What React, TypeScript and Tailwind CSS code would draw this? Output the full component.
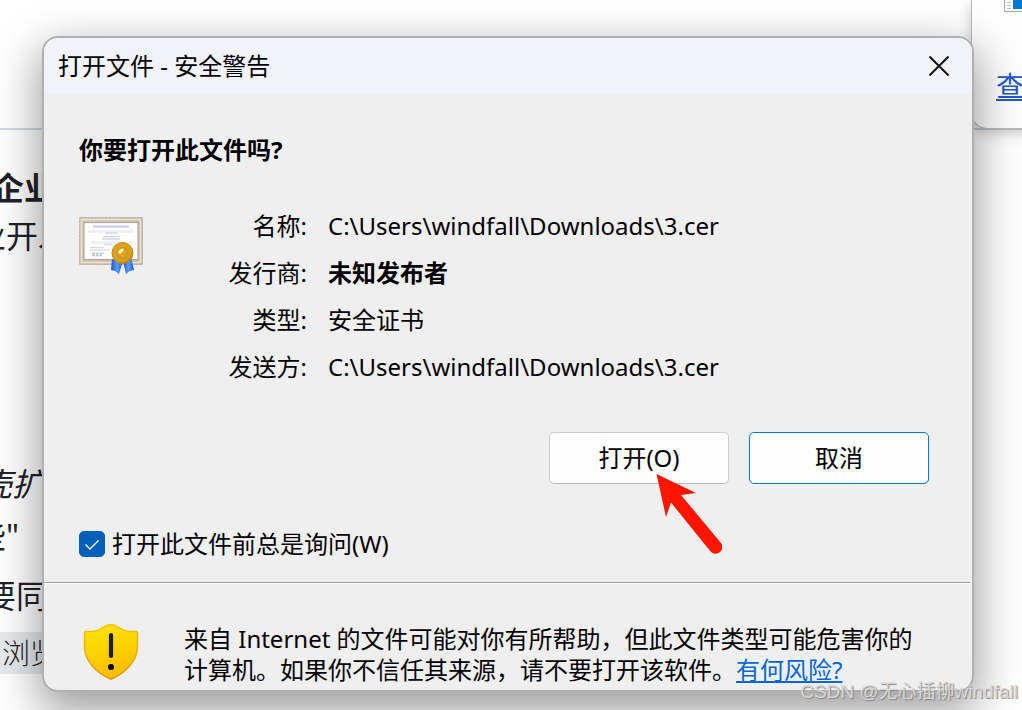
import React from "react";

const details = [
  { label: "名称:", value: "C:\\Users\\windfall\\Downloads\\3.cer", bold: false },
  { label: "发行商:", value: "未知发布者", bold: true },
  { label: "类型:", value: "安全证书", bold: false },
  { label: "发送方:", value: "C:\\Users\\windfall\\Downloads\\3.cer", bold: false },
];

function CertificateIcon() {
  return (
    <svg viewBox="0 0 64 58" className="h-[58px] w-16" aria-hidden="true">
      <defs>
        <linearGradient id="frame" x1="0" y1="0" x2="1" y2="1">
          <stop offset="0" stopColor="#d6cbbc" />
          <stop offset="1" stopColor="#c4b9aa" />
        </linearGradient>
        <radialGradient id="gold" cx="0.42" cy="0.4" r="0.62">
          <stop offset="0" stopColor="#f3d27a" />
          <stop offset="0.3" stopColor="#dba520" />
          <stop offset="0.8" stopColor="#dfa00b" />
          <stop offset="1" stopColor="#a87c1a" />
        </radialGradient>
        <linearGradient id="ribbon" x1="0" y1="0" x2="1" y2="0">
          <stop offset="0" stopColor="#1c55c9" />
          <stop offset="0.5" stopColor="#5b9bff" />
          <stop offset="1" stopColor="#1f5be0" />
        </linearGradient>
      </defs>
      <rect x="0" y="0" width="64" height="48" rx="1.5" fill="url(#frame)" />
      <rect x="0.8" y="0.8" width="62.4" height="46.4" rx="1" fill="none" stroke="#bdb3a6" strokeWidth="1.5" strokeDasharray="2 1.5" />
      <rect x="2.5" y="2.5" width="59" height="43" fill="none" stroke="#e9e2d8" strokeWidth="1.5" />
      <rect x="5" y="5.5" width="54" height="37" fill="#fdfdfb" stroke="#b3a797" strokeWidth="1.2" />
      <path d="M14 9.5h36" stroke="#c8cbe0" strokeWidth="1.8" />
      <path d="M9 14.5h46M12 25.5h42" stroke="#eceef3" strokeWidth="2.4" />
      <path d="M26 16h12M24 19.5h17M23 22h18" stroke="#d3d6e7" strokeWidth="1.3" />
      <path d="M25 27.5h8M11 33h20M11 30.5h14" stroke="#dbdde5" strokeWidth="1.4" />
      <path d="M13 36.5h12M13 38.5h10" stroke="#b9c2d2" strokeWidth="1.5" strokeDasharray="3 .8" />
      <path d="M33 42l11 2-4 13-4-3-4-1z" fill="url(#ribbon)" />
      <path d="M44 44l8-4 3 13-4 1-4 3z" fill="url(#ribbon)" />
      <circle cx="43.5" cy="36" r="10.5" fill="url(#gold)" stroke="#bd8d1c" strokeWidth="1" />
      <circle cx="43.5" cy="36" r="5.5" fill="#dda21d" stroke="#c2922b" strokeWidth="1.2" />
      <path d="M40.500 36.500a4 4 0 0 1 4-3.500" stroke="#fff0bc" strokeWidth="3" fill="none" />
    </svg>
  );
}

function ShieldIcon() {
  return (
    <svg viewBox="0 0 56 58" className="h-[58px] w-14 shrink-0" aria-hidden="true">
      <defs>
        <linearGradient id="shield" x1="0.3" y1="0" x2="0.6" y2="1">
          <stop offset="0" stopColor="#ffe10a" />
          <stop offset="0.5" stopColor="#ffd104" />
          <stop offset="1" stopColor="#fcb900" />
        </linearGradient>
        <linearGradient id="edge" x1="0" y1="0" x2="0" y2="1">
          <stop offset="0" stopColor="#edc400" />
          <stop offset="1" stopColor="#e99600" />
        </linearGradient>
      </defs>
      <path
        d="M28 1.500C22 1.500 18 8.500 9 8.500H3Q1.500 8.500 1.500 10V23C1.500 38 13 49.500 28 56.200C43 49.500 54.500 38 54.500 23V10Q54.500 8.500 53 8.500H47C38 8.500 34 1.500 28 1.500Z"
        fill="url(#shield)"
        stroke="url(#edge)"
        strokeWidth="1.5"
      />
      <path d="M28 12v21" stroke="#1c1d1c" strokeWidth="4.200" strokeLinecap="round" />
      <circle cx="28" cy="44" r="3.100" fill="#0b0b0b" />
    </svg>
  );
}

function BackgroundDocument() {
  return (
    <div className="flex min-h-screen flex-col text-[32px] leading-10 whitespace-nowrap text-[#1f2328]" aria-hidden="true">
      <div className="h-32 shrink-0" />
      <div className="h-0.5 shrink-0 bg-[#d1d9e0]" />
      <p className="-ml-2 mt-[38px] font-bold">企业</p>
      <p className="-ml-[26px] mt-2">业开发</p>
      <p className="-ml-5 mt-[208px] italic">壳扩展</p>
      <p className="-ml-[26px] mt-3">些"</p>
      <p className="-ml-4 mt-5">要同意</p>
      <p className="mt-4 w-14 bg-[#e7eaed] pl-0.5 text-[28px] leading-[42px] font-light">浏览</p>
    </div>
  );
}

function BackgroundPopup() {
  return (
    <aside className="absolute top-0 left-[calc(100%_-_51px)] h-[129px] w-80 overflow-hidden rounded-bl-2xl border-b border-l border-[#b9b9b9] bg-[#fdfdfd] shadow-[0_4px_14px_rgba(0,0,0,0.22)]">
      <div className="flex flex-col gap-14 pl-8">
        <svg viewBox="0 0 30 12" className="h-3 w-[30px]" aria-hidden="true">
          <path d="M.5 0v11.500H30" fill="none" stroke="#a8a8a8" />
          <path d="M3 2.500h4M3 5.500h4M3 8.500h4" stroke="#b7c1ca" />
          <path d="M9 0h21v9H9z" fill="#0878d0" />
        </svg>
        <a href="#view" className="-ml-2 text-[28px] leading-9 text-[#2457c9] underline decoration-2 underline-offset-2">查看</a>
      </div>
    </aside>
  );
}

export default function App() {
  return (
    <main className="relative min-h-screen overflow-hidden bg-white font-['Noto_Sans','Noto_Sans_CJK_SC',sans-serif] text-2xl text-black">
      <BackgroundDocument />
      <BackgroundPopup />

      <section
        role="dialog"
        aria-labelledby="dialog-title"
        className="absolute top-9 right-12 left-[42px] overflow-hidden rounded-2xl border-2 border-[#afafaf] bg-[#efefef] shadow-[0_16px_44px_4px_rgba(0,0,0,0.38)]"
      >
        <header className="flex h-14 items-center justify-between bg-[#f1f3f9] pr-[21px] pl-3.5">
          <h1 id="dialog-title" className="leading-8">打开文件 - 安全警告</h1>
          <button type="button" aria-label="关闭" className="flex size-6 items-center justify-center">
            <svg viewBox="0 0 20 20" className="size-5" aria-hidden="true">
              <path d="M.5.500l19 19M19.500.500l-19 19" stroke="#111" strokeWidth="2" />
            </svg>
          </button>
        </header>

        <div className="px-[35px] pt-10">
          <h2 className="leading-8 font-bold">你要打开此文件吗?</h2>

          <div className="mt-11 flex">
            <div className="w-[148px] pt-[7px]">
              <CertificateIcon />
            </div>
            <dl className="grid grid-cols-[80px_1fr] gap-x-[21px] gap-y-[15px] leading-8 whitespace-nowrap">
              {details.map((item) => (
                <React.Fragment key={item.label}>
                  <dt className="text-right">{item.label}</dt>
                  <dd className={item.bold ? "font-bold" : ""}>{item.value}</dd>
                </React.Fragment>
              ))}
            </dl>
          </div>

          <div className="mt-[49px] flex justify-end gap-5 pr-2">
            <div className="relative">
              <button type="button" className="h-[52px] w-[180px] rounded-[5px] border border-[#cecece] border-b-[#bababa] bg-[#fdfdfd] leading-8">打开(O)</button>
              <svg viewBox="0 0 66 82" className="pointer-events-none absolute top-[41px] left-[107px] h-[82px] w-[66px]" aria-hidden="true">
                <path d="M.5 1L40 20 25 22 64.500 69.500A6.500 6.500 0 0 1 54.500 78.500L15 29.500 10 44Z" fill="#ff1400" />
              </svg>
            </div>
            <button type="button" className="h-[52px] w-[180px] rounded-[5px] border border-[#0078d4] bg-[#fdfdfd] leading-8">取消</button>
          </div>

          <label className="mt-11 flex items-center gap-[7px] leading-8">
            <span className="grid size-[26px] shrink-0">
              <input type="checkbox" defaultChecked className="peer col-start-1 row-start-1 size-[26px] appearance-none rounded-[5px] border border-[#005fb8] checked:bg-[#005fb8]" />
              <svg viewBox="0 0 26 26" className="pointer-events-none invisible col-start-1 row-start-1 size-[26px] peer-checked:visible" aria-hidden="true">
                <path d="M6.500 13.500l4.500 4.500 8.500-8.500" fill="none" stroke="white" strokeWidth="1.300" />
              </svg>
            </span>
            打开此文件前总是询问(W)
          </label>
        </div>

        <footer className="mt-[22px] mr-0.5 flex items-start gap-[45px] border-t border-[#9c9c9c] pt-10 pl-[39px] shadow-[inset_0_1px_0_white]">
          <ShieldIcon />
          <p className="pr-[52px] pb-[5px] leading-[31px]">
            来自 Internet 的文件可能对你有所帮助，但此文件类型可能危害你的计算机。如果你不信任其来源，请不要打开该软件。<a href="#risk" className="text-[#0067d4] underline decoration-2 underline-offset-2">有何风险?</a>
          </p>
        </footer>
      </section>

      <p className="absolute right-1 bottom-1 font-['Liberation_Sans','Noto_Sans_CJK_SC',sans-serif] text-[19px] leading-7 whitespace-nowrap text-[#d6d6d6] [text-shadow:1px_1px_1px_#888]">
        CSDN @无心插柳windfall
      </p>
    </main>
  );
}
